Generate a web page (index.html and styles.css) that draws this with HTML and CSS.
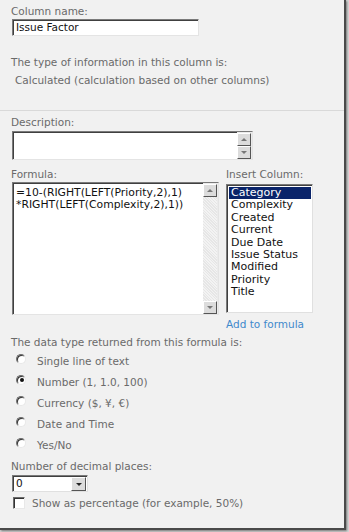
FILE: index.html
```html
<!DOCTYPE html>
<html>
<head>
<meta charset="utf-8">
<link rel="stylesheet" href="styles.css">
</head>
<body>
<div class="frame">
  <section class="sec sec-top">
    <div class="label">Column name:</div>
    <div class="field name-field">Issue Factor</div>
    <div class="label type-label">The type of information in this column is:</div>
    <div class="label calc">Calculated (calculation based on other columns)</div>
  </section>
  <section class="sec sec-main">
    <div class="label">Description:</div>
    <div class="field desc-field">
      <div class="desc-body"></div>
      <div class="vscroll">
        <div class="sbtn up"><i></i></div>
        <div class="strack short"></div>
        <div class="sbtn down"><i></i></div>
      </div>
    </div>
    <div class="formula-grid">
      <div class="col-left">
        <div class="label">Formula:</div>
        <div class="field formula-field">
          <div class="formula-text">=10-(RIGHT(LEFT(Priority,2),1)<br>*RIGHT(LEFT(Complexity,2),1))</div>
          <div class="vscroll">
            <div class="sbtn up"><i></i></div>
            <div class="strack"></div>
            <div class="sbtn down"><i></i></div>
          </div>
        </div>
      </div>
      <div class="col-right">
        <div class="label">Insert Column:</div>
        <ul class="listbox">
          <li class="sel">Category</li>
          <li>Complexity</li>
          <li>Created</li>
          <li>Current</li>
          <li>Due Date</li>
          <li>Issue Status</li>
          <li>Modified</li>
          <li>Priority</li>
          <li>Title</li>
        </ul>
        <a class="add-link">Add to formula</a>
      </div>
    </div>
    <div class="label data-label">The data type returned from this formula is:</div>
    <div class="radios">
      <div class="radio-row"><span class="radio"></span><span class="label">Single line of text</span></div>
      <div class="radio-row"><span class="radio on"></span><span class="label">Number (1, 1.0, 100)</span></div>
      <div class="radio-row"><span class="radio"></span><span class="label">Currency ($, ¥, €)</span></div>
      <div class="radio-row"><span class="radio"></span><span class="label">Date and Time</span></div>
      <div class="radio-row"><span class="radio"></span><span class="label">Yes/No</span></div>
    </div>
    <div class="label dec-label">Number of decimal places:</div>
    <div class="select">
      <span class="select-val">0</span>
      <span class="select-btn"><i></i></span>
    </div>
    <div class="check-row"><span class="checkbox"></span><span class="label">Show as percentage (for example, 50%)</span></div>
  </section>
</div>
</body>
</html>
```
FILE: styles.css
```css
html, body {
  margin: 0;
  padding: 0;
  background: #d6d6d6;
}
body {
  width: 349px;
  height: 532px;
  overflow: hidden;
  font-family: "DejaVu Sans", "Liberation Sans", sans-serif;
}
.frame {
  width: 344px;
  height: 528px;
  background: #f1f1f1;
  border-right: 2px solid #4a4a4a;
  border-bottom: 2px solid #4a4a4a;
  box-shadow: 1px 1px 2px rgba(0,0,0,0.45);
  overflow: hidden;
}
.label {
  font-size: 10.5px;
  line-height: 14px;
  color: #6a6a6a;
  white-space: nowrap;
}
.sec {
  padding: 0 0 0 11px;
}
.sec-top {
  padding-top: 4px;
  padding-bottom: 23px;
}
.field {
  box-sizing: border-box;
  background: #fff;
  border-top: 1px solid #7a7a7a;
  border-left: 1px solid #7a7a7a;
  border-right: 1px solid #e4e4e4;
  border-bottom: 1px solid #e4e4e4;
  box-shadow: inset 1px 1px 0 #404040;
}
.name-field {
  margin: 1px 0 0 1px;
  width: 187px;
  height: 17px;
  font-size: 10.5px;
  line-height: 15px;
  padding-left: 3px;
  color: #111;
}
.type-label {
  margin-top: 19px;
}
.calc {
  margin-top: 4px;
  padding-left: 4px;
}
.sec-main {
  border-top: 1px solid #d9d9d9;
  padding-top: 4px;
}
.desc-field {
  margin: 2px 0 0 1px;
  width: 241px;
  height: 29px;
  display: flex;
}
.desc-body {
  flex: 1;
}
.vscroll {
  width: 14px;
  display: flex;
  flex-direction: column;
  background: #ebebeb;
  padding: 1px 1px 0 0;
}
.sbtn {
  box-sizing: border-box;
  height: 13px;
  background: #dcdcdc;
  border-top: 1px solid #fff;
  border-left: 1px solid #fff;
  border-right: 1px solid #555;
  border-bottom: 1px solid #555;
  display: flex;
  align-items: center;
  justify-content: center;
}
.sbtn i {
  width: 0;
  height: 0;
  border-left: 3px solid transparent;
  border-right: 3px solid transparent;
}
.sbtn.up i { border-bottom: 3px solid #777; }
.sbtn.down i { border-top: 3px solid #777; }
.strack {
  flex: 1;
  background: repeating-linear-gradient(45deg, #e6e6e6 0 1px, #f3f3f3 1px 2px);
}
.strack.short { background: none; }
.formula-grid {
  display: grid;
  grid-template-columns: 207px 87px;
  column-gap: 8px;
  margin-top: 7px;
}
.formula-field {
  margin: 1px 0 0 1px;
  width: 207px;
  height: 133px;
  display: flex;
}
.formula-text {
  flex: 1;
  padding: 4px 0 0 3px;
  font-size: 10.8px;
  line-height: 12px;
  color: #111;
  white-space: nowrap;
}
.col-right {
  display: flex;
  flex-direction: column;
}
.listbox {
  list-style: none;
  margin: 3px 0 0 0;
  padding: 2px 1px 0 2px;
  box-sizing: border-box;
  width: 87px;
  height: 129px;
  background: #fff;
  border-top: 1px solid #7a7a7a;
  border-left: 1px solid #7a7a7a;
  border-right: 1px solid #e0e0e0;
  border-bottom: 1px solid #e0e0e0;
  box-shadow: inset 1px 1px 0 #404040;
  font-size: 11px;
  line-height: 12.4px;
  color: #111;
}
.listbox li {
  padding-left: 2px;
  white-space: nowrap;
}
.listbox li.sel {
  background: #0a246a;
  color: #fff;
}
.add-link {
  font-size: 10.5px;
  line-height: 14px;
  color: #3f89cc;
  margin-top: 4px;
  white-space: nowrap;
}
.data-label {
  margin-top: 4px;
}
.radios {
  margin-top: 1px;
}
.radio-row {
  height: 21px;
  display: flex;
  align-items: center;
  padding-left: 5px;
}
.radio {
  box-sizing: border-box;
  width: 10px;
  height: 10px;
  border-radius: 50%;
  background: #fff;
  border: 1px solid;
  border-color: #6a6a6a #e8e8e8 #e8e8e8 #6a6a6a;
  box-shadow: inset 1px 1px 0 #333;
  margin-right: 11px;
  position: relative;
  top: -2px;
}
.radio.on::after {
  content: "";
  position: absolute;
  left: 2.5px;
  top: 2.5px;
  width: 4px;
  height: 4px;
  border-radius: 50%;
  background: #111;
}
.dec-label {
  margin-top: 4px;
}
.select {
  margin: 2px 0 0 1px;
  box-sizing: border-box;
  width: 76px;
  height: 17px;
  display: flex;
  background: #fff;
  border-top: 1px solid #7a7a7a;
  border-left: 1px solid #7a7a7a;
  border-right: 1px solid #e0e0e0;
  border-bottom: 1px solid #e0e0e0;
  box-shadow: inset 1px 1px 0 #404040;
}
.select-val {
  flex: 1;
  font-size: 10.5px;
  line-height: 15px;
  padding-left: 3px;
  color: #111;
}
.select-btn {
  box-sizing: border-box;
  width: 15px;
  height: 14px;
  margin: 1px 1px 0 0;
  background: #dcdcdc;
  border-top: 1px solid #fff;
  border-left: 1px solid #fff;
  border-right: 1px solid #555;
  border-bottom: 1px solid #555;
  display: flex;
  align-items: center;
  justify-content: center;
}
.select-btn i {
  width: 0;
  height: 0;
  border-left: 3px solid transparent;
  border-right: 3px solid transparent;
  border-top: 3px solid #222;
}
.check-row {
  margin-top: 4px;
  height: 14px;
  display: flex;
  align-items: center;
  padding-left: 2px;
}
.checkbox {
  box-sizing: border-box;
  width: 12px;
  height: 12px;
  background: #fff;
  border: 1px solid;
  border-color: #6a6a6a #e8e8e8 #e8e8e8 #6a6a6a;
  box-shadow: inset 1px 1px 0 #333;
  margin-right: 7px;
}
```
